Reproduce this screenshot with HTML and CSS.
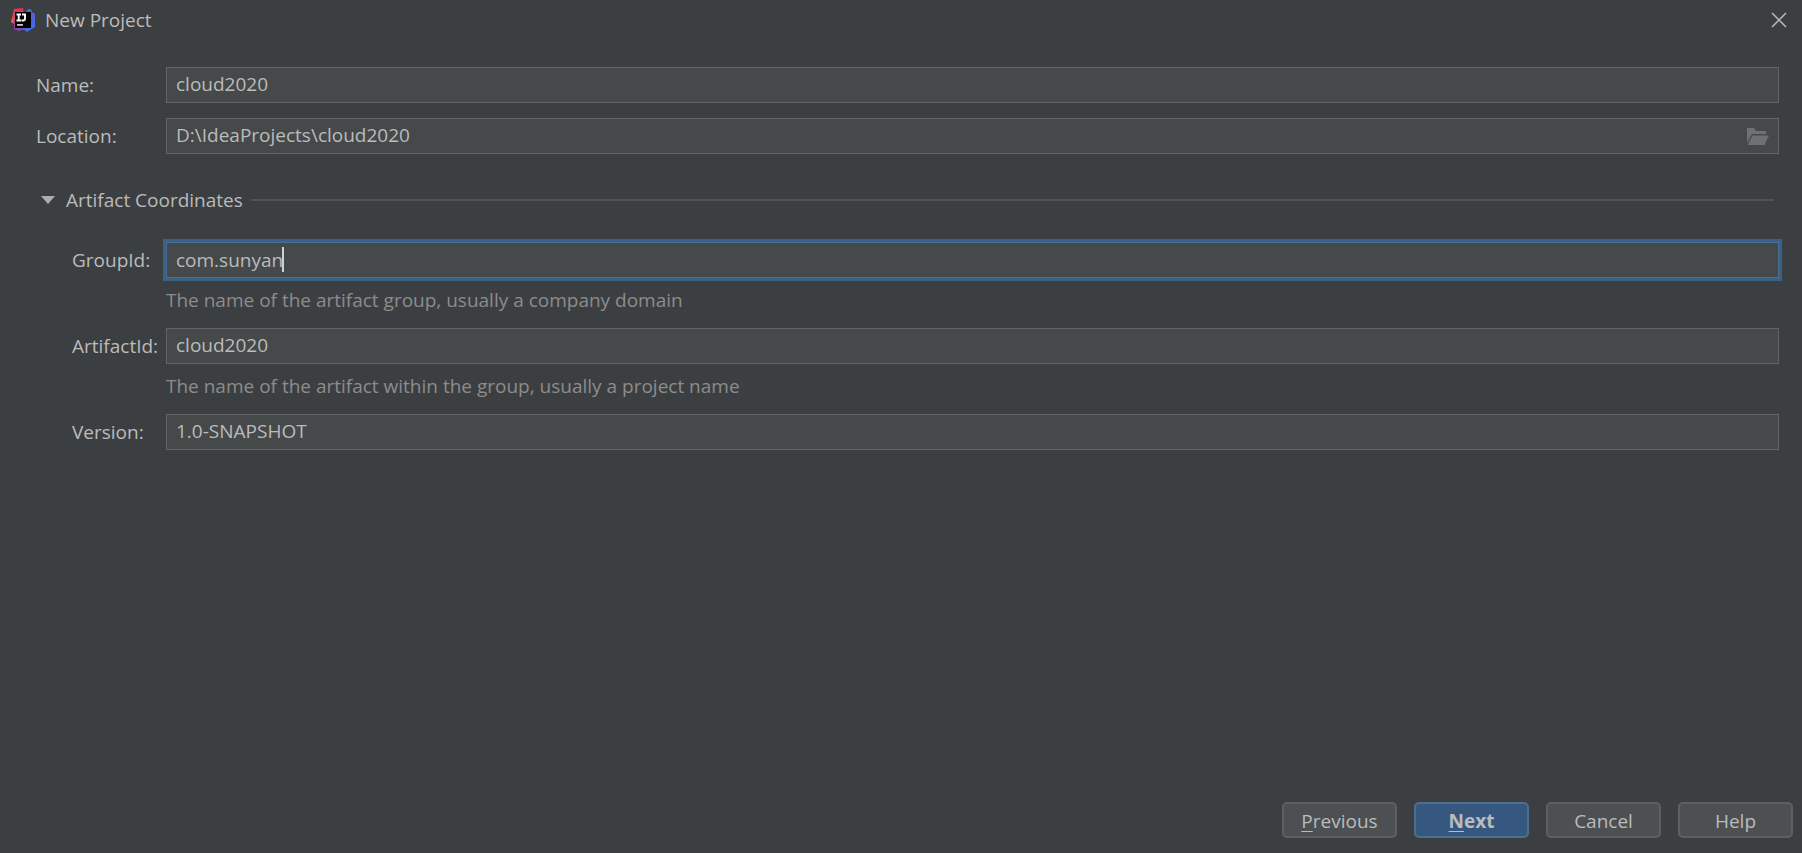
FILE: index.html
```html
<!DOCTYPE html>
<html lang="en">
<head>
<meta charset="utf-8">
<title>New Project</title>
<link rel="stylesheet" href="styles.css">
</head>
<body>
<header class="titlebar">
  <svg class="app-icon" viewBox="0 0 24 24" aria-hidden="true">
    <defs>
      <linearGradient id="warm" x1="0" y1="1" x2="0.6" y2="0">
        <stop offset="0" stop-color="#f98a12"/>
        <stop offset="0.4" stop-color="#d8475c"/>
        <stop offset="1" stop-color="#e0305f"/>
      </linearGradient>
      <linearGradient id="cool" x1="0" y1="0" x2="0.4" y2="1">
        <stop offset="0" stop-color="#1f7fd0"/>
        <stop offset="0.5" stop-color="#5a5fc8"/>
        <stop offset="1" stop-color="#3f6cf0"/>
      </linearGradient>
      <linearGradient id="base" x1="0" y1="0" x2="1" y2="0">
        <stop offset="0" stop-color="#a03a9c"/>
        <stop offset="1" stop-color="#5a55e8"/>
      </linearGradient>
    </defs>
    <path d="M3 1 12 0 14 12 5 17 0 14Z" fill="url(#warm)"/>
    <path d="M3 12 14 16 16 22 10 22 8 23 3 21Z" fill="url(#base)"/>
    <path d="M14 5 17 1 20 1 21 4 24 6 24 19 16 24 12 20Z" fill="url(#cool)"/>
    <path d="M4 4H20V20H4Z" fill="#000"/>
    <path d="M5.500 6.500H10M7.700 6.500V12.500M5.500 12.500H10M11 6.500H14V10.500Q14 12.500 12 12.500H10.500" fill="none" stroke="#fff" stroke-width="1.900"/>
    <path d="M6 16.200H12V17.600H6Z" fill="#fff"/>
  </svg>
  <h1 class="title">New Project</h1>
  <button class="close" type="button" aria-label="Close">
    <svg class="close-icon" viewBox="0 0 16 16" aria-hidden="true"><path d="M1 1 15 15M15 1 1 15"/></svg>
  </button>
</header>
<form class="form">
  <div class="fields">
    <div class="row">
      <label class="label" for="name">Name:</label>
      <input class="input" id="name" type="text" value="cloud2020">
    </div>
    <div class="row">
      <label class="label" for="location">Location:</label>
      <div class="control">
        <input class="input" id="location" type="text" value="D:\IdeaProjects\cloud2020">
        <button class="browse" type="button" aria-label="Browse">
          <svg class="folder" viewBox="0 0 22 17" aria-hidden="true"><path d="M0 0H7L9 3H19V6H5L0 15ZM5.500 7.500H22L17.500 17H0.500Z"/></svg>
        </button>
      </div>
    </div>
  </div>
  <button class="section" type="button" aria-expanded="true">
    <svg class="arrow" viewBox="0 0 14 8" aria-hidden="true"><path d="M0 0H14L7 8Z"/></svg>
    <span>Artifact Coordinates</span>
    <span class="rule"></span>
  </button>
  <div class="coordinates">
    <div class="row">
      <label class="label" for="group">GroupId:</label>
      <div class="control">
        <input class="input focused" id="group" type="text" value="com.sunyan" aria-describedby="group-hint">
        <span class="caret"></span>
      </div>
      <p class="hint" id="group-hint">The name of the artifact group, usually a company domain</p>
    </div>
    <div class="row">
      <label class="label" for="artifact">ArtifactId:</label>
      <input class="input" id="artifact" type="text" value="cloud2020" aria-describedby="artifact-hint">
      <p class="hint" id="artifact-hint">The name of the artifact within the group, usually a project name</p>
    </div>
    <div class="row">
      <label class="label" for="version">Version:</label>
      <input class="input" id="version" type="text" value="1.0-SNAPSHOT">
    </div>
  </div>
</form>
<footer class="actions">
  <button class="button" type="button"><u>P</u>revious</button>
  <button class="button primary" type="button"><u>N</u>ext</button>
  <button class="button" type="button">Cancel</button>
  <button class="button" type="button">Help</button>
</footer>
</body>
</html>
```
FILE: styles.css
```css
* {
  box-sizing: border-box;
}

body {
  display: flex;
  flex-direction: column;
  min-height: 100vh;
  margin: 0;
  background: #3c3f41;
  color: #bbbbbb;
  font: 19px/24px "Open Sans", "Noto Sans", sans-serif;
}

button,
input {
  font: inherit;
  color: inherit;
}

.titlebar {
  display: flex;
  align-items: center;
  height: 39px;
  padding: 0 15px 0 11px;
}

.app-icon {
  width: 24px;
  height: 24px;
  margin-right: 10px;
}

.title {
  flex: 1;
  margin: 0;
  font-size: inherit;
  font-weight: 400;
}

.close,
.browse {
  display: flex;
  padding: 0;
  border: 0;
  background: none;
}

.close-icon {
  width: 16px;
  height: 16px;
  fill: none;
  stroke: #bbbbbb;
  stroke-width: 1.5;
}

.form {
  flex: 1;
  padding: 28px 23px 0 36px;
}

.fields {
  display: grid;
  gap: 15px;
}

.row {
  display: grid;
  grid-template-columns: 130px 1fr;
  align-items: center;
}

.control {
  position: relative;
}

.input {
  display: block;
  width: 100%;
  height: 36px;
  padding: 0 9px 2px;
  border: 1px solid #646464;
  border-radius: 0;
  outline: 0;
  background: #45494a;
}

.focused {
  padding-bottom: 0;
  border-color: #466d94;
  box-shadow: 0 0 0 3px #3d6185;
}

.caret {
  position: absolute;
  top: 5px;
  left: 116px;
  width: 2px;
  height: 25px;
  background: #d0d0d0;
}

.browse {
  position: absolute;
  top: 10px;
  right: 10px;
}

.folder {
  width: 22px;
  height: 17px;
  fill: #6e7173;
}

.section {
  display: flex;
  align-items: center;
  width: 100%;
  margin-top: 34px;
  padding: 0 5px;
  border: 0;
  background: none;
}

.arrow {
  width: 14px;
  height: 8px;
  margin-right: 11px;
  fill: #adadad;
}

.rule {
  flex: 1;
  height: 2px;
  margin-left: 8px;
  background: #515455;
}

.coordinates {
  display: grid;
  gap: 16px;
  margin-top: 30px;
  padding-left: 36px;
}

.coordinates .row {
  grid-template-columns: 94px 1fr;
}

.hint {
  grid-column: 2;
  margin: 10px 0 0;
  color: #8c8c8c;
}

.actions {
  display: flex;
  justify-content: flex-end;
  gap: 17px;
  padding: 0 9px 15px;
}

.button {
  width: 115px;
  height: 36px;
  padding: 2px 0 0;
  border: 2px solid #5e6060;
  border-radius: 5px;
  background: #4c5052;
}

.button u {
  text-underline-offset: 3px;
  text-decoration-thickness: 1px;
}

.primary {
  border-color: #4c708c;
  background: #365880;
  font-weight: 700;
}
```
